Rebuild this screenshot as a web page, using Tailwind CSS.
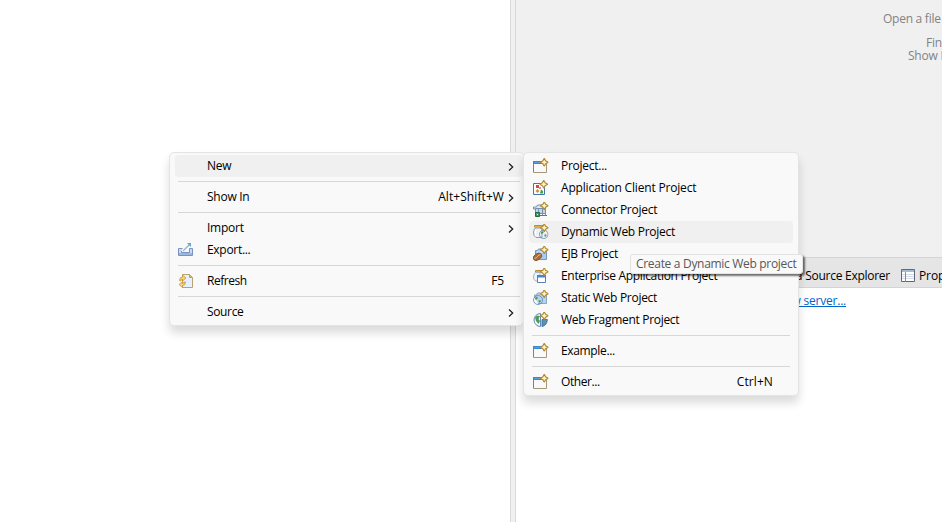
<!DOCTYPE html>
<html lang="en">
<head>
<meta charset="utf-8">
<title>New project menu</title>
<script src="https://cdn.jsdelivr.net/npm/@tailwindcss/browser@4"></script>
</head>
<body class="relative flex h-[522px] w-[942px] overflow-hidden bg-white font-['Open_Sans','Noto_Sans',sans-serif] text-[12px] leading-[22px] text-black">

<svg class="hidden">
  <defs>
    <linearGradient id="sky" x2="1" y2="1"><stop stop-color="#fff"/><stop offset="1" stop-color="#a9cdf0"/></linearGradient>
    <linearGradient id="page" x2="1" y2="1"><stop offset=".45" stop-color="#f0f8ff"/><stop offset="1" stop-color="#fbe08a"/></linearGradient>
    <radialGradient id="sea" cx=".35" cy=".3"><stop stop-color="#d5f1fb"/><stop offset=".6" stop-color="#5fa9d6"/><stop offset="1" stop-color="#2f6795"/></radialGradient>
    <symbol id="spark" viewBox="0 0 8 8"><path d="M4 .3 5.300 2.700 7.700 4 5.300 5.300 4 7.700 2.700 5.300 .3 4 2.700 2.700Z" fill="#fff3c0" stroke="#b28a35" stroke-width="1.100"/></symbol>
    <symbol id="globe" viewBox="0 0 10 10"><circle cx="5" cy="5" r="4.500" fill="url(#sea)" stroke="#5c86ad" stroke-width=".8"/><path d="M2 2.800 4 1.800 5 3 3.800 4.500 2.200 4.500ZM5.500 5.500 7.500 5 7.800 6.500 6.200 8Z" fill="#4f9b50"/></symbol>
    <symbol id="window" viewBox="0 0 16 16"><path d="M.5 3.500h13v11H.5z" fill="url(#page)" stroke="#a39877"/><path d="M.5 14V3.500H10" fill="none" stroke="#5c88b4"/><path d="M0 3h11v3H0z" fill="#3d86ca"/><path d="M1 4.500h9" stroke="#5ba0dd"/><use href="#spark" x="7" y="0" width="8.500" height="8.500"/></symbol>
    <symbol id="client" viewBox="0 0 16 16"><path d="M.5 3.500h11v11H.5z" fill="#fff" stroke="#4478ad"/><path d="M3 5h3v3H3z" fill="#d9474b"/><path d="M6 7h2v2H6z" fill="#e48585"/><path d="m4.500 9 2 2-2 2-2-2z" fill="#c89629"/><path d="M8 9.500 10 11v2.500H7z" fill="#37a453"/><use href="#spark" x="6.500" y="0" width="8.500" height="8.500"/></symbol>
    <symbol id="connector" viewBox="0 0 16 16"><path d="M.5 7V5h3l1-2h4l1 2h3v2Z" fill="#dce7f2" stroke="#7790ad"/><path d="M2.500 6.500h10v5h-10z" fill="#c3d5e8" stroke="#7790ad"/><path d="M5.500 7v6M9.500 7v6M12.500 7v6" stroke="#8194ac"/><path d="M5 13.500h9" stroke="#77716e"/><path d="M2.500 10.500h4v4h-4z" fill="#419963" stroke="#226b43"/><path d="M4 12h1v1H4z" fill="#fff"/><use href="#spark" x="7" y="-.5" width="8.500" height="8.500"/></symbol>
    <symbol id="dynamic" viewBox="0 0 16 16"><path d="M1.500 1.500h9V3h-9z" fill="#f5d36d" stroke="#bd8d2b"/><path d="M2 4Q.5 6 .5 9q0 3 2.500 4.500h6V4Z" fill="url(#sky)" stroke="#829fc3"/><path d="M2.500 6v6" stroke="#fff"/><use href="#globe" x="6" y="5.500" width="9.500" height="9.500"/><use href="#spark" x="7" y="-.5" width="8.500" height="8.500"/></symbol>
    <symbol id="ejb" viewBox="0 0 16 16"><path d="M2.500 8V4.500h2l1-1.500h3l1 1.500h4v9h-8Z" fill="#a9cbed" stroke="#7396be"/><path d="M4 6h8" stroke="#e3f0fd"/><ellipse cx="4.500" cy="10.800" rx="4.600" ry="3.100" transform="rotate(-35 4.500 10.800)" fill="#a96f3b" stroke="#7a4b26" stroke-width=".8"/><path d="M1.500 12.500Q4 11.800 4.500 10.500T7.500 8.500" fill="none" stroke="#edc28d"/><use href="#spark" x="7" y="-.5" width="8.500" height="8.500"/></symbol>
    <symbol id="enterprise" viewBox="0 0 16 16"><path d="M2.500 2.500h8v1.500h-8z" fill="#f5d36d" stroke="#bd8d2b"/><path d="M2.500 4.500Q.5 6 .5 9q0 2.500 2 4H7V4.500Z" fill="#edf5fd" stroke="#a3b3ce"/><path d="M4.500 7.500h8v7h-8z" fill="#fff" stroke="#5d7eb2"/><path d="M4 7h9v2.500H4z" fill="#4a83c7"/><path d="M5 10h7v4H5z" fill="url(#page)"/><use href="#spark" x="7" y="-.5" width="8.500" height="8.500"/></symbol>
    <symbol id="static" viewBox="0 0 16 16"><path d="M1.500 7V5h2l1-2h3l1 1.500h5v9H5" fill="#b9d3ee" stroke="#88a5c8"/><use href="#globe" x="0" y="5" width="10" height="10"/><use href="#spark" x="7" y="-.5" width="8.500" height="8.500"/></symbol>
    <symbol id="fragment" viewBox="0 0 16 16"><path d="M7.500 1.500A6.500 6.500 0 0 0 7.500 14.500Z" fill="url(#sea)" stroke="#5e8cb3"/><path d="M2 5.500 4 3.500 7 4 5.500 7 7 9 5.500 12 3 9Z" fill="#4e9a56"/><path d="M9 7.500V14.500Q14 13.500 14.300 7.500Z" fill="#5e8dba" stroke="#4a75a0"/><path d="M10 9h2.500l-2 3Z" fill="#65a165"/><use href="#spark" x="7" y="-.5" width="8.500" height="8.500"/></symbol>
    <symbol id="export" viewBox="0 0 16 16"><path d="M4.500 6.500h-4v7h14v-7h-3v4h-8V9" fill="#c9d9f0" stroke="#7692c2"/><path d="M1 12h13" stroke="#9db7df" stroke-width="2"/><path d="M5 9 11.500 2.500" fill="none" stroke="#8bb8d2" stroke-width="1.300"/><path d="M9 1h4v4Z" fill="#6ba3c9"/></symbol>
    <symbol id="refresh" viewBox="0 0 16 16"><path d="M4.500 1.500h7l3 3v10h-10z" fill="#e6f0ff" stroke="#b8a273"/><path d="M11.500 1.500v3h3z" fill="#d7b96a" stroke="#b8a273"/><path d="M1.500 7.500Q1.500 4 4.500 4V2l3.500 3L4.500 8V6.200Q3 6 3 8ZM7.500 9q0 3.500-3 3.500v2L1 11.500 4.500 8.800v1.700q1.500 0 1.500-1.500Z" fill="#f8d47a" stroke="#c5953a" stroke-width=".8"/></symbol>
    <symbol id="chevron" viewBox="0 0 6 8"><path d="M1 .5 4.700 4 1 7.500" fill="none" stroke="#222" stroke-width="1.300"/></symbol>
  </defs>
</svg>

<aside class="w-[510px] shrink-0 bg-white"></aside>
<div class="w-[6px] shrink-0 border-x border-[#d9d9d9] bg-[#f0f0f0]"></div>
<main class="flex min-w-0 flex-1 flex-col overflow-hidden">
  <section class="h-[257px] shrink-0 overflow-hidden bg-[#f0f0f0] text-[#838383]">
    <div class="flex flex-col pt-[12px] leading-[13px] whitespace-nowrap">
      <p class="pl-[367px] tracking-[-0.26px]">Open a file</p>
      <p class="pt-[11px] pl-[410px] tracking-[-0.22px]">Find Actions</p>
      <p class="pl-[392px] tracking-[-0.22px]">Show Key Assist</p>
    </div>
  </section>
  <nav class="flex h-[31px] shrink-0 items-center overflow-hidden border-y border-[#d5d5d5] bg-[#e5e5e5] pt-[6px] pl-[254px] whitespace-nowrap">
    <span class="w-[120px] shrink-0 text-right tracking-[-0.26px]">Data Source Explorer</span>
    <svg class="mb-[1px] ml-[11px] h-[13px] w-[14px] shrink-0" viewBox="0 0 14 13"><path d="M.5.5h13v12H.5z" fill="#fff" stroke="#5b687e"/><path d="M1 2h12" stroke="#a7bad5" stroke-width="2"/><path d="M1 5.500h12M1 7.500h12M1 9.500h12" stroke="#d4dbe6"/><path d="M4.500 3v9.500" stroke="#8090aa"/></svg>
    <span class="pl-[4px] tracking-[-0.1px]">Properties</span>
  </nav>
  <section class="flex-1 bg-white pt-[2px]">
    <a class="block w-[330px] text-right tracking-[-0.22px] text-[#0066cc] underline">create a new server...</a>
  </section>
</main>

<div role="menu" class="absolute top-[152px] left-[169px] flex h-[174px] w-[355px] flex-col rounded-[5px] border border-[#e4e4e4] bg-[#f9f9f9] py-[2px] pl-[5px] whitespace-nowrap shadow-[0_7px_10px_rgba(0,0,0,0.14)]">
  <div class="flex h-[22px] items-center rounded-[4px] bg-[#f0f0f0] pr-[9px] pl-[32px]"><span class="flex-1 tracking-[-0.22px]">New</span><svg class="mt-px h-2 w-1.5"><use href="#chevron"/></svg></div>
  <hr class="my-1 mr-[3px] ml-[3px] h-px border-0 bg-[#d7d7d7]">
  <div class="flex h-[22px] items-center pr-[9px] pl-[32px]"><span class="flex-1 tracking-[-0.26px]">Show In</span><span class="pr-[4px] tracking-[0.08px]">Alt+Shift+W</span><svg class="mt-px h-2 w-1.5"><use href="#chevron"/></svg></div>
  <hr class="my-1 mr-[3px] ml-[3px] h-px border-0 bg-[#d7d7d7]">
  <div class="flex h-[22px] items-center pr-[9px] pl-[32px]"><span class="flex-1 tracking-[-0.26px]">Import</span><svg class="mt-px h-2 w-1.5"><use href="#chevron"/></svg></div>
  <div class="flex h-[22px] items-center pl-[3px]"><svg class="mr-[13px] size-4"><use href="#export"/></svg><span class="tracking-[-0.3px]">Export...</span></div>
  <hr class="my-1 mr-[3px] ml-[3px] h-px border-0 bg-[#d7d7d7]">
  <div class="flex h-[22px] items-center pr-[19px] pl-[3px]"><svg class="mr-[13px] size-4"><use href="#refresh"/></svg><span class="flex-1 tracking-[-0.45px]">Refresh</span><span class="tracking-[-0.1px]">F5</span></div>
  <hr class="my-1 mr-[3px] ml-[3px] h-px border-0 bg-[#d7d7d7]">
  <div class="flex h-[22px] items-center pr-[9px] pl-[32px]"><span class="flex-1 tracking-[-0.35px]">Source</span><svg class="mt-px h-2 w-1.5"><use href="#chevron"/></svg></div>
</div>

<div role="menu" class="absolute top-[152px] left-[523px] flex h-[244px] w-[276px] flex-col rounded-[5px] border border-[#e4e4e4] bg-[#f9f9f9] px-[5px] py-[2px] whitespace-nowrap shadow-[0_7px_10px_rgba(0,0,0,0.14)]">
  <div class="flex h-[22px] items-center gap-[12px] pl-[4px]"><svg class="size-4"><use href="#window"/></svg><span class="tracking-[-0.26px]">Project...</span></div>
  <div class="flex h-[22px] items-center gap-[12px] pl-[4px]"><svg class="size-4"><use href="#client"/></svg><span class="tracking-[-0.18px]">Application Client Project</span></div>
  <div class="flex h-[22px] items-center gap-[12px] pl-[4px]"><svg class="size-4"><use href="#connector"/></svg><span class="tracking-[-0.26px]">Connector Project</span></div>
  <div class="flex h-[22px] items-center gap-[12px] rounded-[4px] bg-[#f0f0f0] pl-[4px]"><svg class="size-4"><use href="#dynamic"/></svg><span class="tracking-[-0.27px]">Dynamic Web Project</span></div>
  <div class="flex h-[22px] items-center gap-[12px] pl-[4px]"><svg class="size-4"><use href="#ejb"/></svg><span class="tracking-[-0.26px]">EJB Project</span></div>
  <div class="flex h-[22px] items-center gap-[12px] pl-[4px]"><svg class="size-4"><use href="#enterprise"/></svg><span class="tracking-[-0.31px]">Enterprise Application Project</span></div>
  <div class="flex h-[22px] items-center gap-[12px] pl-[4px]"><svg class="size-4"><use href="#static"/></svg><span class="tracking-[-0.28px]">Static Web Project</span></div>
  <div class="flex h-[22px] items-center gap-[12px] pl-[4px]"><svg class="size-4"><use href="#fragment"/></svg><span class="tracking-[-0.3px]">Web Fragment Project</span></div>
  <hr class="mx-[3px] my-1 h-px border-0 bg-[#d7d7d7]">
  <div class="flex h-[22px] items-center gap-[12px] pl-[4px]"><svg class="size-4"><use href="#window"/></svg><span class="tracking-[-0.34px]">Example...</span></div>
  <hr class="mx-[3px] my-1 h-px border-0 bg-[#d7d7d7]">
  <div class="flex h-[22px] items-center gap-[12px] pr-[20px] pl-[4px]"><svg class="size-4"><use href="#window"/></svg><span class="flex-1 tracking-[-0.4px]">Other...</span><span class="tracking-[0.1px]">Ctrl+N</span></div>
</div>

<div role="tooltip" class="absolute top-[254px] left-[630px] h-[20px] w-[173px] rounded-[3px] border border-[#e3e3e3] bg-[#f9f9f9] pl-[5px] leading-[18px] tracking-[-0.31px] whitespace-nowrap text-[#575757] shadow-[2px_2px_2px_rgba(0,0,0,0.55)]">Create a Dynamic Web project</div>
</body>
</html>
